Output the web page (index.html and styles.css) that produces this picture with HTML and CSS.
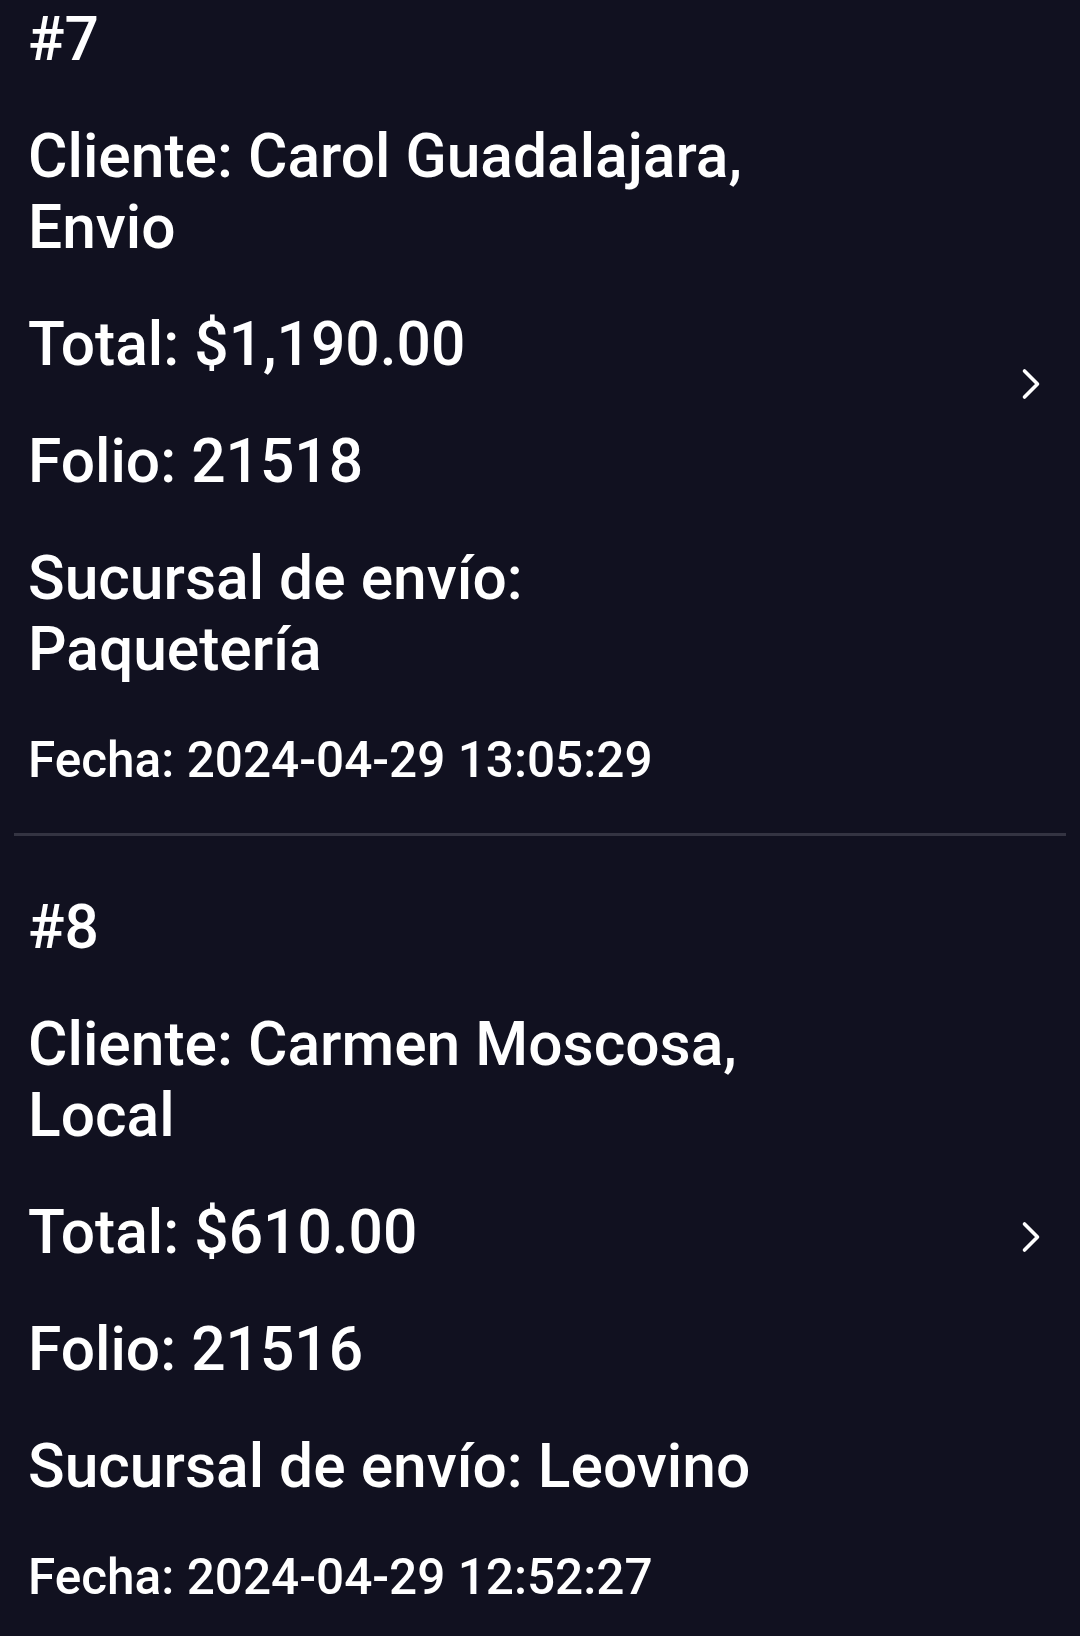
FILE: index.html
```html
<!DOCTYPE html>
<html lang="es">
<head>
<meta charset="utf-8">
<title>Pedidos</title>
<link rel="stylesheet" href="styles.css">
</head>
<body>
<div class="list">
  <div class="item">
    <div class="info">
      <p class="line">#7</p>
      <p class="line">Cliente: Carol Guadalajara,<br>Envio</p>
      <p class="line">Total: $1,190.00</p>
      <p class="line">Folio: 21518</p>
      <p class="line">Sucursal de envío:<br>Paquetería</p>
      <p class="line date">Fecha: 2024-04-29 13:05:29</p>
    </div>
    <svg class="chevron" viewBox="0 0 20 32" width="20" height="32" aria-hidden="true">
      <polyline points="3.5,3 16.5,16 3.5,29" fill="none" stroke="#ffffff" stroke-width="3.6" stroke-linecap="round" stroke-linejoin="round"/>
    </svg>
  </div>
  <div class="item">
    <div class="info">
      <p class="line">#8</p>
      <p class="line">Cliente: Carmen Moscosa,<br>Local</p>
      <p class="line">Total: $610.00</p>
      <p class="line">Folio: 21516</p>
      <p class="line">Sucursal de envío: Leovino</p>
      <p class="line date">Fecha: 2024-04-29 12:52:27</p>
    </div>
    <svg class="chevron" viewBox="0 0 20 32" width="20" height="32" aria-hidden="true">
      <polyline points="3.5,3 16.5,16 3.5,29" fill="none" stroke="#ffffff" stroke-width="3.6" stroke-linecap="round" stroke-linejoin="round"/>
    </svg>
  </div>
</div>
</body>
</html>
```
FILE: styles.css
```css
html, body {
  margin: 0;
  padding: 0;
  background: #111120;
}

body {
  font-family: Roboto, "Noto Sans", "Liberation Sans", sans-serif;
  color: #ffffff;
  -webkit-font-smoothing: antialiased;
}

.list {
  display: flex;
  flex-direction: column;
}

.item {
  display: flex;
  align-items: center;
  margin: 0 14px;
  padding: 56px 25px 44px 14px;
  border-bottom: 3px solid #343442;
}

.item:first-child {
  padding-top: 4px;
}

.item:last-child {
  border-bottom: none;
}

.info {
  flex: 1;
  display: flex;
  flex-direction: column;
  gap: 46px;
}

.line {
  margin: 0;
  font-size: 60.5px;
  line-height: 71px;
  font-weight: 500;
}

.line.date {
  font-size: 49.5px;
  line-height: 58px;
}

.chevron {
  flex: none;
  display: block;
  margin-bottom: 25px;
}
```
